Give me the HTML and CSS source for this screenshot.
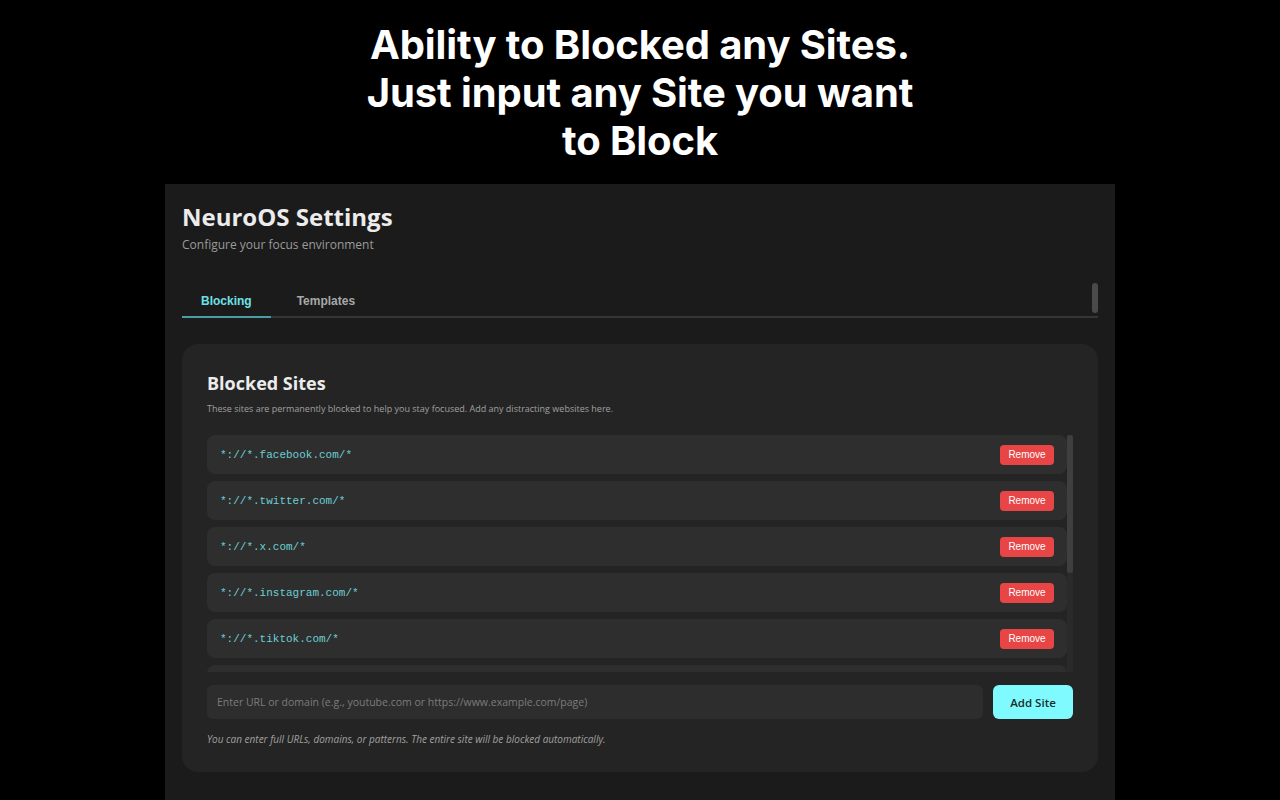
FILE: index.html
```html
<!DOCTYPE html>
<html lang="en">
<head>
    <meta charset="UTF-8">
    <title>NeuroOS Settings</title>
    <link rel="stylesheet" href="styles.css">
</head>
<body>
    <h1 class="promo">Ability to Blocked any Sites. Just input any Site you want to Block</h1>

    <div class="panel">
        <div class="panel-head">
            <h2>NeuroOS Settings</h2>
            <p>Configure your focus environment</p>
        </div>

        <div class="tabs">
            <span class="tab active">Blocking</span>
            <span class="tab">Templates</span>
            <span class="tabs-thumb"></span>
        </div>

        <div class="card">
            <h3>Blocked Sites</h3>
            <p class="card-desc">These sites are permanently blocked to help you stay focused. Add any distracting websites here.</p>

            <div class="list-wrap">
                <div class="site-list">
                    <div class="site-row"><code>*://*.facebook.com/*</code><button class="remove">Remove</button></div>
                    <div class="site-row"><code>*://*.twitter.com/*</code><button class="remove">Remove</button></div>
                    <div class="site-row"><code>*://*.x.com/*</code><button class="remove">Remove</button></div>
                    <div class="site-row"><code>*://*.instagram.com/*</code><button class="remove">Remove</button></div>
                    <div class="site-row"><code>*://*.tiktok.com/*</code><button class="remove">Remove</button></div>
                    <div class="site-row"></div>
                </div>
                <div class="list-scroll"><div class="list-thumb"></div></div>
            </div>

            <div class="add-row">
                <input class="site-input" type="text" placeholder="Enter URL or domain (e.g., youtube.com or https://www.example.com/page)">
                <button class="add-btn">Add Site</button>
            </div>
            <p class="hint">You can enter full URLs, domains, or patterns. The entire site will be blocked automatically.</p>
        </div>
    </div>
</body>
</html>
```

FILE: styles.css
```css
body {
    margin: 0;
    padding: 0;
    background-color: #000;
    color: #fff;
    font-family: "Open Sans", sans-serif;
    overflow: hidden;
}
.promo {
    font-family: Inter, sans-serif;
    font-weight: 700;
    font-size: 40px;
    line-height: 48px;
    text-align: center;
    max-width: 580px;
    margin: 0 auto;
    padding: 21px 0 19px;
    letter-spacing: -0.1px;
}
.panel {
    width: 950px;
    height: 616px;
    margin: 0 auto;
    background-color: #1b1b1b;
    padding: 0 17px;
    box-sizing: border-box;
}
.panel-head {
    padding-top: 17px;
}
.panel-head h2 {
    margin: 0;
    font-size: 24px;
    font-weight: 700;
    line-height: 32px;
    color: #ececec;
}
.panel-head p {
    margin: 3px 0 0;
    font-size: 12px;
    color: #9a9a9a;
}
.tabs {
    position: relative;
    display: flex;
    margin-top: 31px;
    border-bottom: 2px solid #353535;
}
.tab {
    font-family: "Liberation Sans", Arial, sans-serif;
    font-weight: 700;
    font-size: 12px;
    color: #a8a8a8;
    padding: 10px 19px 8px;
    margin-bottom: -2px;
    border-bottom: 2px solid transparent;
}
.tab.active {
    color: #6fe0e6;
    border-bottom-color: #4a9ea2;
}
.tab + .tab {
    padding-left: 26px;
}
.tabs-thumb {
    position: absolute;
    right: 0;
    top: -1px;
    width: 6px;
    height: 30px;
    border-radius: 3px;
    background-color: #4a4a4a;
}
.card {
    margin-top: 26px;
    background-color: #242424;
    border-radius: 16px;
    padding: 25px 25px 26px;
}
.card h3 {
    margin: 0;
    font-size: 18px;
    font-weight: 700;
    line-height: 28px;
    color: #ececec;
}
.card-desc {
    margin: 5px 0 0;
    font-size: 9px;
    color: #a0a0a0;
}
.list-wrap {
    display: flex;
    margin-top: 20px;
    height: 237px;
    overflow: hidden;
}
.site-list {
    flex: 1;
    display: flex;
    flex-direction: column;
    gap: 7px;
}
.site-row {
    flex: none;
    height: 39px;
    display: flex;
    align-items: center;
    justify-content: space-between;
    padding: 0 13px;
    background-color: #2e2e2e;
    border-radius: 8px;
}
.site-row code {
    font-family: "Liberation Mono", "Courier New", monospace;
    font-size: 11px;
    color: #6ccfd4;
}
.remove {
    font-family: "Liberation Sans", Arial, sans-serif;
    font-size: 10px;
    color: #fff;
    background-color: #e84646;
    border: none;
    border-radius: 4px;
    width: 54px;
    height: 20px;
    padding: 0;
}
.list-scroll {
    width: 6px;
    background-color: #2a2a2a;
}
.list-thumb {
    height: 138px;
    border-radius: 3px;
    background-color: #3f3f3f;
}
.add-row {
    display: flex;
    gap: 10px;
    margin-top: 13px;
}
.site-input {
    flex: 1;
    height: 34px;
    box-sizing: border-box;
    border: none;
    border-radius: 6px;
    background-color: #2d2d2d;
    padding: 0 10px;
    font-family: "Open Sans", sans-serif;
    font-size: 10.5px;
    color: #ddd;
}
.site-input::placeholder {
    color: #7c7c7c;
}
.add-btn {
    width: 80px;
    height: 34px;
    border: none;
    border-radius: 6px;
    background-color: #7ffbff;
    color: #1b2b2c;
    font-family: "Open Sans", sans-serif;
    font-weight: 600;
    font-size: 11.5px;
}
.hint {
    margin: 13px 0 0;
    font-size: 10px;
    font-style: italic;
    color: #a0a0a0;
}
```
